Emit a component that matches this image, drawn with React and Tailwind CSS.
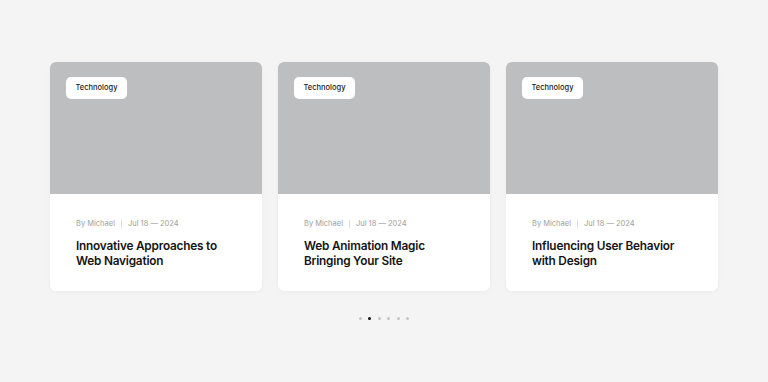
import React from "react";

const posts = [
  { title: ["Innovative Approaches to", "Web Navigation"] },
  { title: ["Web Animation Magic", "Bringing Your Site"] },
  { title: ["Influencing User Behavior", "with Design"] },
];

function PostCard({ post }) {
  return (
    <div className="w-[212px] rounded-[6px] bg-white overflow-hidden shadow-[0_1px_4px_rgba(0,0,0,0.04)]">
      <div className="flex h-[132px] items-start bg-[#bdbebf] pt-[15px] pl-4">
        <span className="flex h-[22px] items-center rounded-[5px] bg-white px-[9.5px] text-[7.5px] font-medium text-[#1a1a1a]">
          Technology
        </span>
      </div>
      <div className="px-[26px] pt-[24px] pb-[22px]">
        <div className="flex items-center text-[7.5px] leading-[12px] text-[#a0a0a0]">
          <span>By Michael</span>
          <span className="mx-[6px] h-[8px] w-px bg-[#dcdcdc]"></span>
          <span>Jul 18 — 2024</span>
        </div>
        <h3 className="mt-[9px] text-[11.8px] font-semibold leading-[15px] tracking-[-0.2px] text-[#141414]">
          {post.title[0]}
          <br />
          {post.title[1]}
        </h3>
      </div>
    </div>
  );
}

export default function App() {
  return (
    <div
      className="h-[382px] w-full bg-[#f4f4f4] pt-[62px]"
      style={{ fontFamily: "Inter, 'Noto Sans', sans-serif" }}
    >
      <div className="flex justify-center gap-4">
        {posts.map((p, i) => (
          <PostCard key={i} post={p} />
        ))}
      </div>
      <div className="mt-[26px] flex justify-center gap-[6.5px]">
        {[0, 1, 2, 3, 4, 5].map((i) => (
          <span
            key={i}
            className={
              i === 1
                ? "h-[3px] w-[3px] rounded-full bg-[#111111]"
                : "h-[3px] w-[3px] rounded-full bg-[#c4c4c4]"
            }
          ></span>
        ))}
      </div>
    </div>
  );
}
